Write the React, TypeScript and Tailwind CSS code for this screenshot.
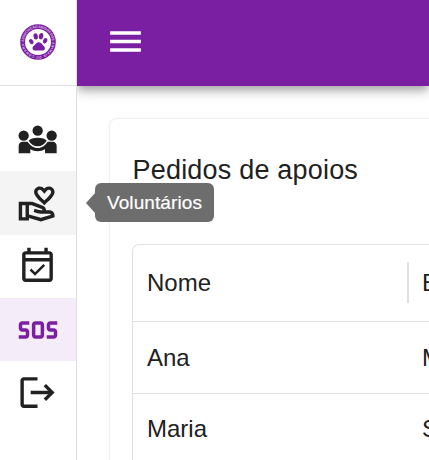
import type { ReactNode } from "react";
import {
  MdLogout,
  MdMenu,
  MdOutlineEventAvailable,
  MdOutlineVolunteerActivism,
  MdSos,
} from "react-icons/md";

function Logo() {
  return (
    <svg viewBox="0 0 36 36" className="size-9" aria-label="Associação Amigos dos Animais de Câmara">
      <defs>
        <path id="ring-top" d="M3.8 18a14.2 14.2 0 1 1 28.4 0" />
        <path id="ring-bottom" d="M32.2 18a14.2 14.2 0 1 1-28.4 0" />
      </defs>
      <circle cx="18" cy="18" r="15.4" fill="none" stroke="#7b1fa2" strokeWidth="4.8" />
      <g fill="#dcc0e6" fontFamily="Liberation Sans, sans-serif" fontWeight="700" fontSize="3.4">
        <text><textPath href="#ring-top" textLength="43">ASSOCIAÇÃO AMIGOS DOS</textPath></text>
        <text><textPath href="#ring-bottom" textLength="43">ANIMAIS DE CÂMARA</textPath></text>
      </g>
      <g fill="#7b1fa2" transform="translate(-1.9 -2.2) scale(1.1)">
        <ellipse cx="12" cy="18" rx="1.8" ry="2.5" transform="rotate(-28 12 18)" />
        <ellipse cx="16" cy="13.3" rx="2" ry="2.9" transform="rotate(-8 16 13.3)" />
        <ellipse cx="20.9" cy="13.1" rx="2" ry="2.9" transform="rotate(10 20.9 13.1)" />
        <ellipse cx="24.6" cy="17.2" rx="1.8" ry="2.5" transform="rotate(28 24.6 17.2)" />
        <path d="M18.8 18.6c-1.9 0-2.7 1.5-4 2.7-1.3 1.1-1.9 1.8-1.6 3.2.4 1.8 2.3 1.6 5.6 1.5 3.4.1 5.2.3 5.5-1.5.3-1.4-.4-2-1.6-3.2-1.2-1.2-2-2.7-3.9-2.7z" />
      </g>
    </svg>
  );
}

function TeamIcon() {
  return (
    <svg viewBox="0 0 132 108" className="h-[36px] w-[44px]" fill="currentColor">
      <circle cx="23" cy="41" r="15.5" />
      <circle cx="65" cy="26" r="15.5" />
      <circle cx="107" cy="41" r="15.5" />
      <path d="M38 56c4-6 14-9 27-9s23 3 27 9c-6 10-15 17-27 17s-21-7-27-17z" />
      <path d="M8 94V72c0-8 5-13 12-13h15c7 11 17 19 30 19s23-8 30-19h15c7 0 12 5 12 13v22H87V82c-6 4-14 6-22 6s-16-2-22-6v12z" />
    </svg>
  );
}

function NavItem({ className = "text-[#212121]", children }: { className?: string; children: ReactNode }) {
  return (
    <button className={`flex w-full shrink-0 items-center justify-center pr-px ${className}`}>
      {children}
    </button>
  );
}

function Row({ name, next, className = "" }: { name: string; next: string; className?: string }) {
  return (
    <div className={`flex h-[72px] items-center border-b border-[#e0e0e0] text-[24px] ${className}`}>
      <span className="w-[275px] shrink-0 pl-[14px]">{name}</span>
      <span className="pl-[14px]">{next}</span>
    </div>
  );
}

export default function App() {
  return (
    <div className="flex h-[460px] w-[429px] overflow-hidden bg-white font-['Liberation_Sans',Arial,sans-serif] text-[#212121]">
      <aside className="relative z-20 flex w-[77px] shrink-0 flex-col border-r border-[#dedede] bg-white">
        <div className="flex h-[86px] shrink-0 items-center justify-center border-b border-[#dedede] pr-px pb-px">
          <Logo />
        </div>
        <nav className="pt-[22px]">
          <NavItem className="h-[63px] text-[#212121]"><TeamIcon /></NavItem>
          <div className="relative">
            <NavItem className="h-[64px] bg-[#f4f4f4] text-[#212121]"><MdOutlineVolunteerActivism className="size-[41px]" /></NavItem>
            <div className="absolute top-3 left-[86px] flex items-center">
              <svg className="h-[20px] w-[9px]" viewBox="0 0 9 20"><path d="M9 0v20L0 10z" fill="#616161" fillOpacity=".92" /></svg>
              <div className="flex h-[39px] w-[119px] items-center justify-center rounded-[6px] bg-[#616161]/92 pt-px text-[19px] tracking-[0.1px] text-white [-webkit-text-stroke:0.2px_white]">
                Voluntários
              </div>
            </div>
          </div>
          <NavItem className="h-[63px] text-[#212121]"><MdOutlineEventAvailable className="size-[41px]" /></NavItem>
          <NavItem className="h-[63px] bg-[#f4ecf8] text-[#7b1fa2]"><MdSos className="size-[42px]" /></NavItem>
          <NavItem className="h-[63px] text-[#212121]"><MdLogout className="size-[41px]" /></NavItem>
        </nav>
      </aside>
      <div className="flex min-w-0 flex-1 flex-col">
        <header className="relative z-10 flex h-[86px] shrink-0 items-center bg-[#7b1fa2] pb-[3px] pl-[28px] text-white shadow-[0_3.4px_6.8px_-1.7px_rgba(0,0,0,0.2),0_6.8px_8.5px_0_rgba(0,0,0,0.14),0_1.7px_17px_0_rgba(0,0,0,0.12)]">
          <MdMenu className="size-[41px]" />
        </header>
        <main className="pt-[33px] pl-[33px]">
          <section className="h-[500px] w-[600px] rounded-[7px] bg-white pt-[33px] pl-[22px] shadow-[0_0_3px_rgba(0,0,0,0.16)]">
            <h1 className="h-[92px] pl-[0.5px] text-[27px] leading-[36px] tracking-[0.2px]">Pedidos de apoios</h1>
            <div className="h-[400px] w-[500px] rounded-tl-[7px] border border-[#e0e0e0]">
              <div className="flex h-[77px] items-center border-b border-[#e0e0e0] text-[24px]">
                <span className="w-[274px] shrink-0 pl-[14px]">Nome</span>
                <span className="mb-px h-[41px] w-[2px] bg-[#e0e0e0]" />
                <span className="pl-[13px]">Email</span>
              </div>
              <Row name="Ana" next="Mota" />
              <Row name="Maria" next="Silva" className="pb-px" />
            </div>
          </section>
        </main>
      </div>
    </div>
  );
}
